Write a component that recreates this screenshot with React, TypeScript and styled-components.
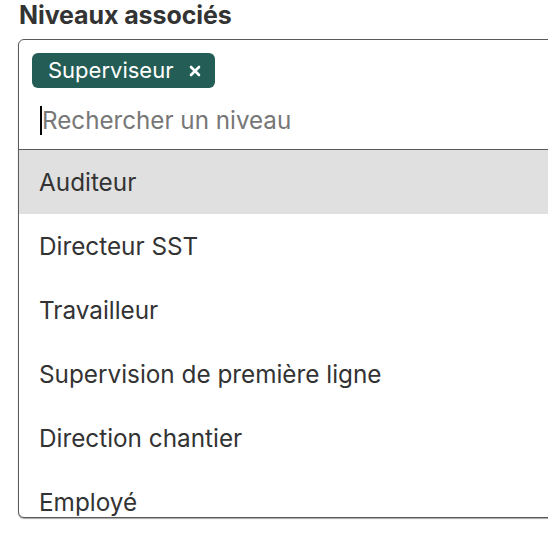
import styled, { createGlobalStyle } from "styled-components";

const GlobalStyle = createGlobalStyle`
  html, body {
    margin: 0;
    padding: 0;
    background: #ffffff;
    overflow: hidden;
  }
  body {
    font-family: Inter, "Liberation Sans", Arial, sans-serif;
    color: #333333;
  }
`;

const Page = styled.div`
  width: 548px;
  height: 536px;
  padding: 0 0 0 18px;
  box-sizing: border-box;
  overflow: hidden;
`;

const Label = styled.div`
  font-size: 25px;
  font-weight: 700;
  color: #333333;
  line-height: 30px;
  margin: 0 0 9px 1px;
  letter-spacing: -0.1px;
`;

const Field = styled.div`
  width: 580px;
  border: 1px solid #5a5a5a;
  border-radius: 6px;
  box-shadow: 0 1px 1px rgba(0, 0, 0, 0.35);
  overflow: hidden;
  background: #ffffff;
`;

const Control = styled.div`
  padding: 13px 0 0 13px;
  border-bottom: 1px solid #5a5a5a;
`;

const Chip = styled.span`
  display: inline-flex;
  align-items: center;
  height: 35px;
  padding: 0 14px 0 16px;
  gap: 16px;
  box-sizing: border-box;
  border-radius: 6px;
  background: #245d56;
  color: #ffffff;
  font-size: 22px;
  line-height: 35px;
`;

const ChipRemove = styled.span`
  display: inline-flex;
  width: 12px;
  height: 12px;
`;

const SearchRow = styled.div`
  display: flex;
  align-items: center;
  height: 57px;
  padding: 4px 0 0 8px;
`;

const Caret = styled.span`
  width: 2px;
  height: 29px;
  background: #000000;
`;

const Placeholder = styled.span`
  font-size: 24.2px;
  color: #777777;
  line-height: 30px;
`;

const Menu = styled.ul`
  list-style: none;
  margin: 0;
  padding: 0;
  height: 367px;
  overflow: hidden;
`;

const Option = styled.li<{ $active?: boolean }>`
  height: 64px;
  display: flex;
  align-items: center;
  padding-left: 20px;
  font-size: 24.3px;
  color: #333333;
  background: ${(p) => (p.$active ? "#e0e0e0" : "transparent")};
`;

const options = [
  "Auditeur",
  "Directeur SST",
  "Travailleur",
  "Supervision de première ligne",
  "Direction chantier",
  "Employé",
];

export default function App() {
  return (
    <>
      <GlobalStyle />
      <Page>
        <Label>Niveaux associés</Label>
        <Field>
          <Control>
            <Chip>
              Superviseur
              <ChipRemove>
                <svg viewBox="0 0 12 12" width="12" height="12">
                  <path
                    d="M2 2 L10 10 M10 2 L2 10"
                    stroke="#ffffff"
                    strokeWidth="2.6"
                    strokeLinecap="round"
                  />
                </svg>
              </ChipRemove>
            </Chip>
            <SearchRow>
              <Caret />
              <Placeholder>Rechercher un niveau</Placeholder>
            </SearchRow>
          </Control>
          <Menu>
            {options.map((o, i) => (
              <Option key={o} $active={i === 0}>
                {o}
              </Option>
            ))}
          </Menu>
        </Field>
      </Page>
    </>
  );
}
